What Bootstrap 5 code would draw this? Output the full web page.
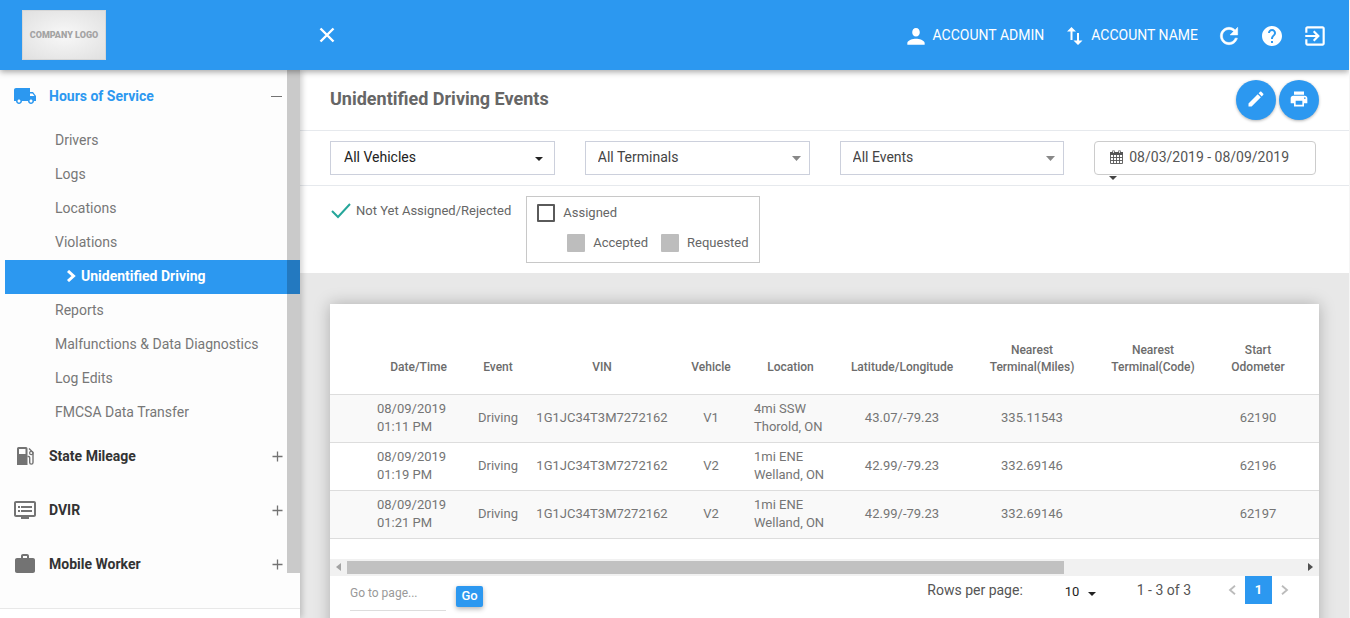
<!DOCTYPE html>
<html lang="en">
<head>
<meta charset="utf-8">
<meta name="viewport" content="width=device-width, initial-scale=1">
<title>Unidentified Driving Events</title>
<link href="https://cdn.jsdelivr.net/npm/bootstrap@5.3.0/dist/css/bootstrap.min.css" rel="stylesheet">
<style>
  :root { --brand: #2c98f0; }
  body { font-family: Roboto, "Liberation Sans", sans-serif; font-size: 14px; line-height: 20px; color: #666; padding-right: 1px; background: #f5f5f5; }
  svg { fill: currentColor; flex: none; display: block; }
  a { text-decoration: none; color: inherit; }

  /* top bar */
  .topbar { height: 70px; background: var(--brand); color: #fff; padding: 0 21px 0 22px; box-shadow: 0 2px 6px rgba(0,0,0,.35); z-index: 3; }
  .logo-box { width: 84px; height: 50px; border: 1px solid #d6d6d6; background: radial-gradient(#f8f8f8, #e0e0e0); color: #a3a3a3; font-family: "Liberation Sans Narrow", Roboto, sans-serif; font-size: 9px; font-weight: 900; white-space: nowrap; }
  .logo-side { width: 296px; }
  .bar-links { gap: 18px; }
  .bar-links svg { margin-top: 1px; }
  .plain-btn { border: 0; background: none; padding: 0; color: inherit; }

  /* sidebar */
  .side { width: 300px; background: #fff; box-shadow: 2px 0 6px rgba(0,0,0,.2); z-index: 2; }
  .side-menu { background: #fdfdfd; border-bottom: 1px solid #e8e8e8; padding-bottom: 18px; }
  .side-head { height: 52px; margin-bottom: 2px; padding: 0 16px 0 13px; color: #333; font-weight: 700; width: 100%; }
  .side-head svg { color: #737373; }
  .side-head.open, .side-head.open svg.main-icon { color: var(--brand); }
  .side-head.open { margin-bottom: 0; }
  .side-list { margin-top: 2px; color: #777; }
  .side-list a { display: flex; align-items: center; height: 34px; margin-left: 5px; padding: 0 0 2px 50px; }
  .side-list a.active { background: var(--brand); color: #fff; font-weight: 700; padding-left: 61px; gap: 5px; }
  .side-thumb { width: 13px; height: 503px; top: 0; right: 0; background: rgba(0,0,0,.2); }

  /* page head and filters */
  .band { background: #fff; padding: 0 30px; }
  .title-band { height: 61px; border-bottom: 1px solid #e6e9ed; }
  .title-band h1 { font-size: 18px; line-height: 24px; font-weight: 700; margin: 0 0 3px; }
  .round-btn { width: 40px; height: 40px; border-radius: 50%; background: var(--brand); color: #fff; border: 0; padding: 0 0 2px; box-shadow: 0 1px 3px rgba(0,0,0,.3); }
  .filter-band { padding-top: 10px; padding-bottom: 10px; border-bottom: 1px solid #e6e9ed; }
  .filter-band .row { --bs-gutter-x: 30px; }
  .filter-band .form-select { height: 34px; border: 1px solid #ccd0dc; border-radius: 0; padding: 0 30px 2px 12px; font-size: 14px; line-height: 20px; color: #444; background-size: 9px 5px; background-position: right 8px center;
    background-image: url("data:image/svg+xml,%3Csvg xmlns='http://www.w3.org/2000/svg' viewBox='0 0 9 5'%3E%3Cpath fill='%23888' d='M0 0h9L4.500 5z'/%3E%3C/svg%3E"); }
  .filter-band .form-select.dark-arrow { color: #222; padding-left: 13px; background-size: 8px 4px; background-position: right 11px top 15px;
    background-image: url("data:image/svg+xml,%3Csvg xmlns='http://www.w3.org/2000/svg' viewBox='0 0 8 4'%3E%3Cpath fill='%23222' d='M0 0h8L4 4z'/%3E%3C/svg%3E"); }
  .date-btn { width: 222px; height: 34px; border: 1px solid #ccc; border-radius: 4px; background: #fff; color: #555; padding: 0 0 2px 15px; gap: 6px; }
  .date-btn .tri { position: absolute; left: 14px; top: 100%; margin-top: 2px; color: #444; }
  .tri { width: 0; height: 0; border: 4px solid transparent; border-top-color: currentColor; border-bottom: 0; }

  .legend-band { padding-top: 10px; padding-bottom: 10px; padding-left: 31px; font-size: 13px; gap: 15px; }
  .box-check { appearance: none; width: 18px; height: 18px; border: 2px solid #5a5a5a; border-radius: 1px; margin: 0; flex: none; background: #fff; }
  .box-check:disabled { background: #bdbdbd; border-color: #bdbdbd; }
  .tick-check { appearance: none; width: 20px; height: 16px; margin: 0; flex: none; background: center / 20px 16px no-repeat
    url("data:image/svg+xml,%3Csvg xmlns='http://www.w3.org/2000/svg' viewBox='0 0 20 16'%3E%3Cpath fill='none' stroke='%2326a69a' stroke-width='2' d='M1 8l6 6L19 1'/%3E%3C/svg%3E"); }
  .legend-group { border: 1px solid #c8c8c8; padding: 6px 10px 9px; gap: 10px; }
  .legend-group label, .legend-band > label { height: 20px; }
  .legend-band > label { margin-top: 5px; gap: 5px; }

  /* results */
  .results-area { background: #e8e8e8; padding: 31px 30px 0; }
  .panel { background: #fff; box-shadow: 0 0 15px rgba(0,0,0,.25); padding-bottom: 60px; }
  .events { table-layout: fixed; width: 100%; color: #757575; font-size: 13px; line-height: 18px; margin-bottom: 20px; }
  .events th { font-size: 12px; line-height: 17px; font-weight: 500; height: 90px; padding: 0 0 18px; vertical-align: bottom; text-align: center; border-bottom: 1px solid #ddd; color: #6c6c6c; }
  .events td { height: 48px; padding: 0; text-align: center; vertical-align: middle; border-bottom: 1px solid #ddd; }
  .events td.start-text { text-align: left; padding-left: 7px; }
  .events tbody tr:nth-child(odd) { background: #f9f9f9; }
  .hbar { height: 17px; background: #f1f1f1; padding: 0 6px; }
  .hbar-track { margin: 0 5px 0 6px; }
  .hbar-thumb { height: 13px; width: 75%; background: #c1c1c1; }
  .panel-foot { padding: 0 20px; color: #555; }
  .goto-input { width: 96px; height: 35px; border: 0; border-bottom: 1px solid #ddd; padding: 0; font-size: 12px; color: #555; background: none; outline: 0; }
  .goto-input::placeholder { color: #999; opacity: 1; }
  .go-btn { width: 27px; height: 21px; border: 0; border-radius: 2px; background: var(--brand); color: #fff; font-size: 13px; font-weight: 500; padding: 0; margin: 10px 0 0 10px; box-shadow: 0 2px 5px rgba(0,0,0,.3); }
  .rows-select { appearance: none; border: 0; width: 31px; height: 20px; padding: 0; margin: 6px 41px 0 42px; font-size: 13px; color: #222; background: right top 10px / 8px 4px no-repeat
    url("data:image/svg+xml,%3Csvg xmlns='http://www.w3.org/2000/svg' viewBox='0 0 8 4'%3E%3Cpath fill='%23222' d='M0 0h8L4 4z'/%3E%3C/svg%3E"); }
  .foot-text { padding-top: 4px; }
  .pages { margin: 0 10px 0 37px; color: #bbb; gap: 9px; }
  .page-now { width: 27px; height: 28px; background: var(--brand); color: #fff; font-size: 13px; font-weight: 700; }
</style>
</head>
<body>
<div class="vh-100 d-flex flex-column overflow-hidden">

  <header class="topbar d-flex align-items-center position-relative flex-shrink-0">
    <div class="logo-side">
      <a href="#" class="logo-box d-flex align-items-center justify-content-center">COMPANY LOGO</a>
    </div>
    <button class="plain-btn" type="button" aria-label="Close menu">
      <svg width="18" height="18" viewBox="0 0 18 18"><path d="M2.500 2.500l13 13M15.500 2.500l-13 13" stroke="#fff" stroke-width="2.400"/></svg>
    </button>
    <nav class="bar-links d-flex align-items-center ms-auto">
      <a href="#" class="d-flex align-items-center gap-1">
        <svg width="26" height="26" viewBox="0 0 24 24"><path d="M12 12.500c2.210 0 3.500-1.790 3.500-4s-1.290-4-3.500-4-3.500 1.790-3.500 4 1.290 4 3.500 4zm0 2c-2.670 0-8 1.340-8 4V20h16v-1.500c0-2.660-5.330-4-8-4z"/></svg>
        ACCOUNT ADMIN
      </a>
      <a href="#" class="d-flex align-items-center gap-1">
        <svg width="25" height="26" viewBox="0 0 25 26"><path d="M9.500 4l4.500 4.500H10.500V17h-2V8.500H5zM16 22l-4.500-4.500H15V10h2v7.500h3.500z"/></svg>
        ACCOUNT NAME
      </a>
      <a href="#" aria-label="Refresh"><svg width="26" height="26" viewBox="0 0 24 24"><path d="M17.650 6.350C16.200 4.900 14.210 4 12 4c-4.420 0-7.990 3.580-7.990 8s3.570 8 7.990 8c3.730 0 6.840-2.550 7.730-6h-2.080c-.82 2.330-3.040 4-5.650 4-3.310 0-6-2.690-6-6s2.690-6 6-6c1.660 0 3.140.69 4.220 1.780L13 11h7V4l-2.350 2.350z" stroke="currentColor" stroke-width=".5"/></svg></a>
      <a href="#" aria-label="Help"><svg width="24" height="24" viewBox="0 0 24 24"><path d="M12 2C6.480 2 2 6.480 2 12s4.480 10 10 10 10-4.480 10-10S17.520 2 12 2zm1 17h-2v-2h2v2zm2.070-7.750l-.9.92C13.450 12.900 13 13.500 13 15h-2v-.5c0-1.100.45-2.100 1.170-2.830l1.240-1.260c.37-.36.59-.86.59-1.410 0-1.100-.9-2-2-2s-2 .9-2 2H8c0-2.210 1.790-4 4-4s4 1.790 4 4c0 .88-.36 1.680-.93 2.250z"/></svg></a>
      <a href="#" aria-label="Sign out"><svg width="26" height="26" viewBox="0 0 24 24"><path d="M10.090 15.590L11.500 17l5-5-5-5-1.410 1.410L12.670 11H3v2h9.670l-2.580 2.590zM19 3H5c-1.110 0-2 .9-2 2v4h2V5h14v14H5v-4H3v4c0 1.100.89 2 2 2h14c1.100 0 2-.9 2-2V5c0-1.100-.9-2-2-2z"/></svg></a>
    </nav>
  </header>

  <div class="d-flex flex-grow-1 overflow-hidden">
    <aside class="side position-relative flex-shrink-0">
      <div class="side-menu">
        <button class="plain-btn side-head open d-flex align-items-center" type="button">
          <svg class="main-icon me-2" width="24" height="24" viewBox="0 0 24 24"><path d="M20 8h-3V4H3c-1.100 0-2 .9-2 2v11h2c0 1.660 1.340 3 3 3s3-1.340 3-3h6c0 1.660 1.340 3 3 3s3-1.340 3-3h2v-5l-3-4zM6 18.500c-.83 0-1.500-.67-1.500-1.500s.67-1.500 1.500-1.500 1.500.67 1.500 1.500-.67 1.500-1.500 1.500zm13.500-9l1.960 2.500H17V9.500h2.500zm-1.500 9c-.83 0-1.500-.67-1.500-1.500s.67-1.500 1.500-1.500 1.500.67 1.500 1.500-.67 1.500-1.500 1.500z"/></svg>
          <span class="ms-1">Hours of Service</span>
          <svg class="ms-auto" width="13" height="12" viewBox="0 0 13 12"><path d="M0 6h11v1H0z"/></svg>
        </button>
        <nav class="side-list">
          <a href="#">Drivers</a>
          <a href="#">Logs</a>
          <a href="#">Locations</a>
          <a href="#">Violations</a>
          <a href="#" class="active"><svg width="10" height="12" viewBox="0 0 10 12"><path d="M2 1l5.500 5L2 11" fill="none" stroke="#fff" stroke-width="3"/></svg>Unidentified Driving</a>
          <a href="#">Reports</a>
          <a href="#">Malfunctions &amp; Data Diagnostics</a>
          <a href="#">Log Edits</a>
          <a href="#">FMCSA Data Transfer</a>
        </nav>
        <button class="plain-btn side-head d-flex align-items-center" type="button">
          <svg class="me-2" width="24" height="24" viewBox="0 0 24 24"><path fill-rule="evenodd" d="M5.500 3h7.500a1.500 1.500 0 0 1 1.500 1.500V21H4V4.500A1.500 1.500 0 0 1 5.500 3zM6 5v5h6.500V5z"/><path d="M14.500 12.500h1.200q1 0 1 1V18.500a1.600 1.600 0 0 0 3.300 0V8.500L16 4.500" fill="none" stroke="currentColor" stroke-width="1.400"/><circle cx="18.300" cy="9" r="1.700" fill="none" stroke="currentColor" stroke-width="1.200"/></svg>
          <span class="ms-1">State Mileage</span>
          <svg class="ms-auto" width="13" height="12" viewBox="0 0 13 12"><path d="M1.500 6.500h10M6.500 1.500v10" stroke="currentColor" stroke-width="1.300"/></svg>
        </button>
        <button class="plain-btn side-head d-flex align-items-center" type="button">
          <svg class="me-2" width="24" height="24" viewBox="0 0 24 24"><path d="M21 3H3c-1.100 0-2 .9-2 2v12c0 1.100.9 2 2 2h5v2h8v-2h5c1.100 0 1.990-.9 1.990-2L23 5c0-1.100-.9-2-2-2zm0 14H3V5h18v12zm-2-9H8v2h11V8zm0 4H8v2h11v-2zM7 8H5v2h2V8zm0 4H5v2h2v-2z"/></svg>
          <span class="ms-1">DVIR</span>
          <svg class="ms-auto" width="13" height="12" viewBox="0 0 13 12"><path d="M1.500 6.500h10M6.500 1.500v10" stroke="currentColor" stroke-width="1.300"/></svg>
        </button>
        <button class="plain-btn side-head d-flex align-items-center mb-0" type="button">
          <svg class="me-2" width="24" height="24" viewBox="0 0 24 24"><path d="M20 6h-4V4c0-1.110-.89-2-2-2h-4c-1.110 0-2 .89-2 2v2H4c-1.110 0-1.990.89-1.990 2L2 19c0 1.110.89 2 2 2h16c1.110 0 2-.89 2-2V8c0-1.110-.89-2-2-2zm-6 0h-4V4h4v2z"/></svg>
          <span class="ms-1">Mobile Worker</span>
          <svg class="ms-auto" width="13" height="12" viewBox="0 0 13 12"><path d="M1.500 6.500h10M6.500 1.500v10" stroke="currentColor" stroke-width="1.300"/></svg>
        </button>
      </div>
      <div class="side-thumb position-absolute"></div>
    </aside>

    <main class="flex-grow-1 overflow-hidden d-flex flex-column">
      <div class="band title-band d-flex align-items-center justify-content-between flex-shrink-0">
        <h1>Unidentified Driving Events</h1>
        <div class="d-flex" style="gap:3px">
          <button class="round-btn d-flex align-items-center justify-content-center" type="button" aria-label="Edit"><svg width="20" height="20" viewBox="0 0 24 24"><path d="M3 17.250V21h3.750L17.810 9.940l-3.750-3.750L3 17.250zM20.710 7.040c.39-.39.39-1.020 0-1.410l-2.340-2.340c-.39-.39-1.020-.39-1.410 0l-1.830 1.830 3.750 3.750 1.830-1.830z"/></svg></button>
          <button class="round-btn d-flex align-items-center justify-content-center" type="button" aria-label="Print"><svg width="20" height="20" viewBox="0 0 24 24"><path d="M19 8H5c-1.660 0-3 1.340-3 3v6h4v4h12v-4h4v-6c0-1.660-1.340-3-3-3zm-3 11H8v-5h8v5zm3-7c-.55 0-1-.45-1-1s.45-1 1-1 1 .45 1 1-.45 1-1 1zm-1-9H6v4h12V3z"/></svg></button>
        </div>
      </div>

      <div class="band filter-band flex-shrink-0">
        <div class="row">
          <div class="col-3"><select class="form-select dark-arrow" aria-label="Vehicles"><option>All Vehicles</option></select></div>
          <div class="col-3"><select class="form-select" aria-label="Terminals"><option>All Terminals</option></select></div>
          <div class="col-3"><select class="form-select" aria-label="Events"><option>All Events</option></select></div>
          <div class="col-3">
            <button class="date-btn d-flex align-items-center position-relative" type="button">
              <svg width="13" height="14" viewBox="0 0 13 14"><path d="M.5 3.500h12v10H.5zM.5 7.500h12M.5 10.500h12M3.500 5v8.500M6.500 5v8.500M9.500 5v8.500" fill="none" stroke="currentColor" stroke-width=".9"/><path d="M0 2h13v3H0z"/><path d="M3.500 .5v3M9.500 .5v3" stroke="currentColor" stroke-width="2.400"/><path d="M3.500 1v2M9.500 1v2" stroke="#fff" stroke-width=".8"/></svg>
              08/03/2019 - 08/09/2019
              <span class="tri"></span>
            </button>
          </div>
        </div>
      </div>

      <div class="band legend-band d-flex align-items-start flex-shrink-0">
        <label class="d-flex align-items-center"><input type="checkbox" class="tick-check" checked>Not Yet Assigned/Rejected</label>
        <div class="legend-group d-flex flex-column">
          <label class="d-flex align-items-center gap-2"><input type="checkbox" class="box-check">Assigned</label>
          <div class="d-flex" style="gap:13px;padding-left:30px">
            <label class="d-flex align-items-center gap-2"><input type="checkbox" class="box-check" disabled>Accepted</label>
            <label class="d-flex align-items-center gap-2"><input type="checkbox" class="box-check" disabled>Requested</label>
          </div>
        </div>
      </div>

      <div class="results-area flex-grow-1">
        <section class="panel">
          <table class="events">
            <colgroup>
              <col style="width:40px"><col style="width:97px"><col style="width:62px"><col style="width:146px"><col style="width:72px"><col style="width:87px"><col style="width:136px"><col style="width:124px"><col style="width:118px"><col style="width:92px"><col>
            </colgroup>
            <thead>
              <tr><th></th><th>Date/Time</th><th>Event</th><th>VIN</th><th>Vehicle</th><th>Location</th><th>Latitude/Longitude</th><th>Nearest<br>Terminal(Miles)</th><th>Nearest<br>Terminal(Code)</th><th>Start<br>Odometer</th><th></th></tr>
            </thead>
            <tbody>
              <tr><td></td><td class="start-text">08/09/2019<br>01:11 PM</td><td>Driving</td><td>1G1JC34T3M7272162</td><td>V1</td><td class="start-text">4mi SSW<br>Thorold, ON</td><td>43.07/-79.23</td><td>335.11543</td><td></td><td>62190</td><td></td></tr>
              <tr><td></td><td class="start-text">08/09/2019<br>01:19 PM</td><td>Driving</td><td>1G1JC34T3M7272162</td><td>V2</td><td class="start-text">1mi ENE<br>Welland, ON</td><td>42.99/-79.23</td><td>332.69146</td><td></td><td>62196</td><td></td></tr>
              <tr><td></td><td class="start-text">08/09/2019<br>01:21 PM</td><td>Driving</td><td>1G1JC34T3M7272162</td><td>V2</td><td class="start-text">1mi ENE<br>Welland, ON</td><td>42.99/-79.23</td><td>332.69146</td><td></td><td>62197</td><td></td></tr>
            </tbody>
          </table>
          <div class="hbar d-flex align-items-center">
            <svg width="5" height="8" viewBox="0 0 5 8" style="color:#a3a3a3"><path d="M5 0v8L0 4z"/></svg>
            <div class="hbar-track flex-grow-1"><div class="hbar-thumb"></div></div>
            <svg width="5" height="8" viewBox="0 0 5 8" style="color:#505050"><path d="M0 0v8l5-4z"/></svg>
          </div>
          <div class="panel-foot d-flex align-items-start">
            <input class="goto-input" type="text" placeholder="Go to page..." aria-label="Go to page">
            <button class="go-btn" type="button">Go</button>
            <label class="foot-text ms-auto" for="rows">Rows per page:</label>
            <select class="rows-select" id="rows"><option>10</option></select>
            <span class="foot-text">1 - 3 of 3</span>
            <nav class="pages d-flex align-items-center">
              <a href="#" aria-label="Previous"><svg width="8" height="10" viewBox="0 0 8 10"><path d="M7 .7L2 5l5 4.300" fill="none" stroke="currentColor" stroke-width="1.800"/></svg></a>
              <a href="#" class="page-now d-flex align-items-center justify-content-center">1</a>
              <a href="#" aria-label="Next"><svg width="8" height="10" viewBox="0 0 8 10"><path d="M1 .7L6 5 1 9.300" fill="none" stroke="currentColor" stroke-width="1.800"/></svg></a>
            </nav>
          </div>
        </section>
      </div>
    </main>
  </div>
</div>
<script src="https://cdn.jsdelivr.net/npm/bootstrap@5.3.0/dist/js/bootstrap.bundle.min.js"></script>
</body>
</html>
